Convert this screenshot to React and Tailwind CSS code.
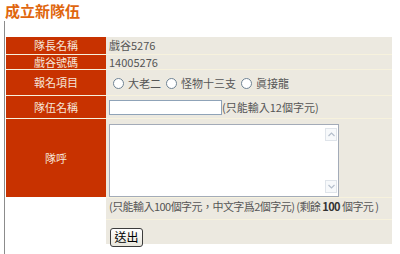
import React from 'react';

const font = { fontFamily: '"Noto Sans CJK TC", "Liberation Sans", sans-serif' };

const Label = ({ children, className = '' }) => (
  <div className={`bg-[#c83200] text-[#f6e6da] text-[11px] flex items-center justify-center ${className}`}>
    {children}
  </div>
);

const Cell = ({ children, className = '' }) => (
  <div className={`bg-[#ece9e0] text-[#555] text-[11px] flex items-center pl-[3px] ${className}`}>
    {children}
  </div>
);

const Radio = ({ label }) => (
  <span className='flex items-center'>
    <span className='w-[11px] h-[11px] rounded-full border border-[#6f8394] bg-white' />
    <span className='ml-[4px]'>{label}</span>
  </span>
);

// little scroll arrow box of the textarea
const Arrow = ({ up }) => (
  <div className='w-[12px] h-[13px] border border-[#dfe4ea] bg-[#f7f9fb] flex items-center justify-center'>
    <svg width='7' height='5' viewBox='0 0 7 5'>
      <path
        d={up ? 'M0.5 4 L3.5 1 L6.5 4' : 'M0.5 1 L3.5 4 L6.5 1'}
        fill='none'
        stroke='#b5bfcc'
        strokeWidth='1.2'
      />
    </svg>
  </div>
);

export default function App() {
  return (
    <div className='w-[400px] h-[254px] bg-white overflow-hidden' style={font}>
      <h1 className='pl-[5px] pt-[1px] text-[15px] leading-[20px] font-bold text-[#e0660e]'>
        成立新隊伍
      </h1>

      <div className='ml-[4px] h-[233px] border-l border-[#8c8c8c] pt-[16px] pl-[1px]'>
        <div
          className='
            w-[386px] grid grid-cols-[100px_286px] gap-y-px bg-[#f7f2dd]
            grid-rows-[17px_14px_25px_22px_78px_21px_24px]
        '>
          <Label>隊長名稱</Label>
          <Cell>戲谷5276</Cell>

          <Label>戲谷號碼</Label>
          <Cell>14005276</Cell>

          <Label>報名項目</Label>
          <Cell className='gap-[5px] pl-[7px] pt-[1px]'>
            <Radio label='大老二' />
            <Radio label='怪物十三支' />
            <Radio label='眞接龍' />
          </Cell>

          <Label>隊伍名稱</Label>
          <Cell>
            <input
              type='text'
              className='w-[113px] h-[15px] bg-white border border-[#8fa3b8] outline-none'
            />
            <span>(只能輸入12個字元)</span>
          </Cell>

          <Label>隊呼</Label>
          <div className='bg-[#ece9e0] pl-[3px] pt-[5px]'>
            <div className='w-[230px] h-[73px] bg-white border border-[#a3abb8] flex justify-end'>
              <div className='flex flex-col justify-between py-[3px] pr-[1px]'>
                <Arrow up />
                <Arrow />
              </div>
            </div>
          </div>

          <div className='row-span-2 bg-white -mt-px' />
          <Cell className='pb-[5px] whitespace-nowrap tracking-[-0.55px]'>
            <span>
              (只能輸入100個字元，中文字爲2個字元) (剩餘 <b className='text-[#333]'>100</b> 個字元 )
            </span>
          </Cell>

          <div className='bg-[#ece9e0] pl-[4px] pt-[3px]'>
            <button
              className='
                w-[33px] h-[19px] rounded-[3px] border border-[#3c3c3c] text-black text-[12px] leading-[16px]
                bg-gradient-to-b from-white to-[#e8e6dc]
            '>
              送出
            </button>
          </div>
        </div>
      </div>
    </div>
  );
}
